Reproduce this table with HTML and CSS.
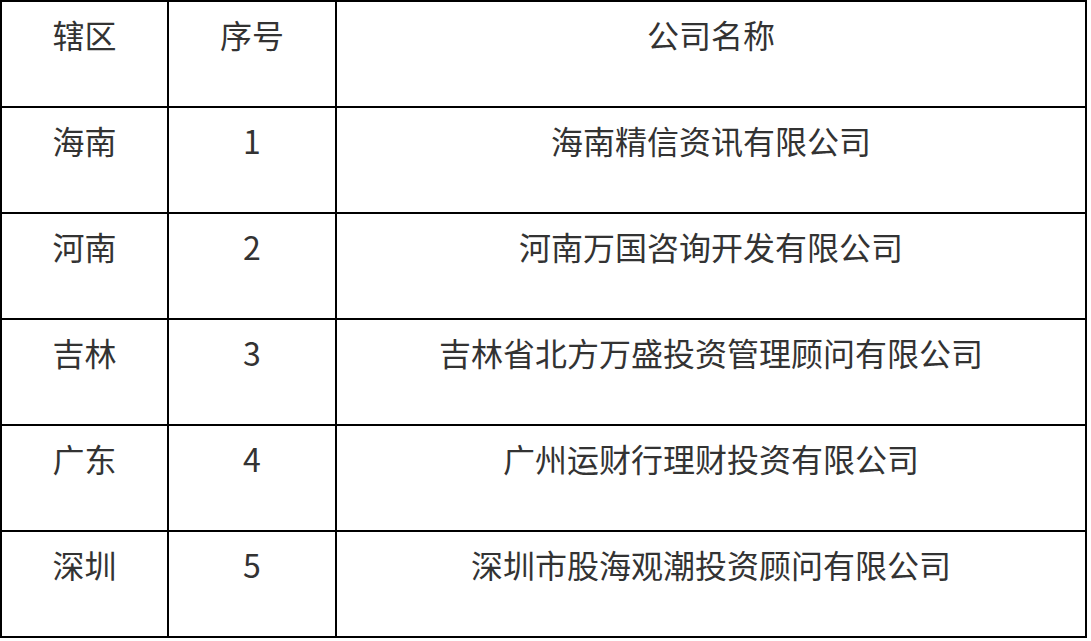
FILE: index.html
```html
<!DOCTYPE html>
<html lang="zh-CN">
<head>
<meta charset="utf-8">
<title>公司名称</title>
<link rel="stylesheet" href="styles.css">
</head>
<body>
<div class="table">
  <div class="cell">辖区</div><div class="cell">序号</div><div class="cell">公司名称</div>
  <div class="cell">海南</div><div class="cell">1</div><div class="cell">海南精信资讯有限公司</div>
  <div class="cell">河南</div><div class="cell">2</div><div class="cell">河南万国咨询开发有限公司</div>
  <div class="cell">吉林</div><div class="cell">3</div><div class="cell">吉林省北方万盛投资管理顾问有限公司</div>
  <div class="cell">广东</div><div class="cell">4</div><div class="cell">广州运财行理财投资有限公司</div>
  <div class="cell">深圳</div><div class="cell">5</div><div class="cell">深圳市股海观潮投资顾问有限公司</div>
</div>
</body>
</html>
```
FILE: styles.css
```css
html, body {
  margin: 0;
  padding: 0;
  background: #ffffff;
}
.table {
  display: grid;
  grid-template-columns: 167px 168px 750px;
  grid-auto-rows: 106px;
  width: 1085px;
  border-left: 2px solid #000;
  border-top: 2px solid #000;
  font-family: "Noto Sans CJK SC", "Microsoft YaHei", sans-serif;
  font-size: 32px;
  color: #333333;
}
.cell {
  box-sizing: border-box;
  border-right: 2px solid #000;
  border-bottom: 2px solid #000;
  text-align: center;
  padding-top: 9px;
  line-height: normal;
}
```
